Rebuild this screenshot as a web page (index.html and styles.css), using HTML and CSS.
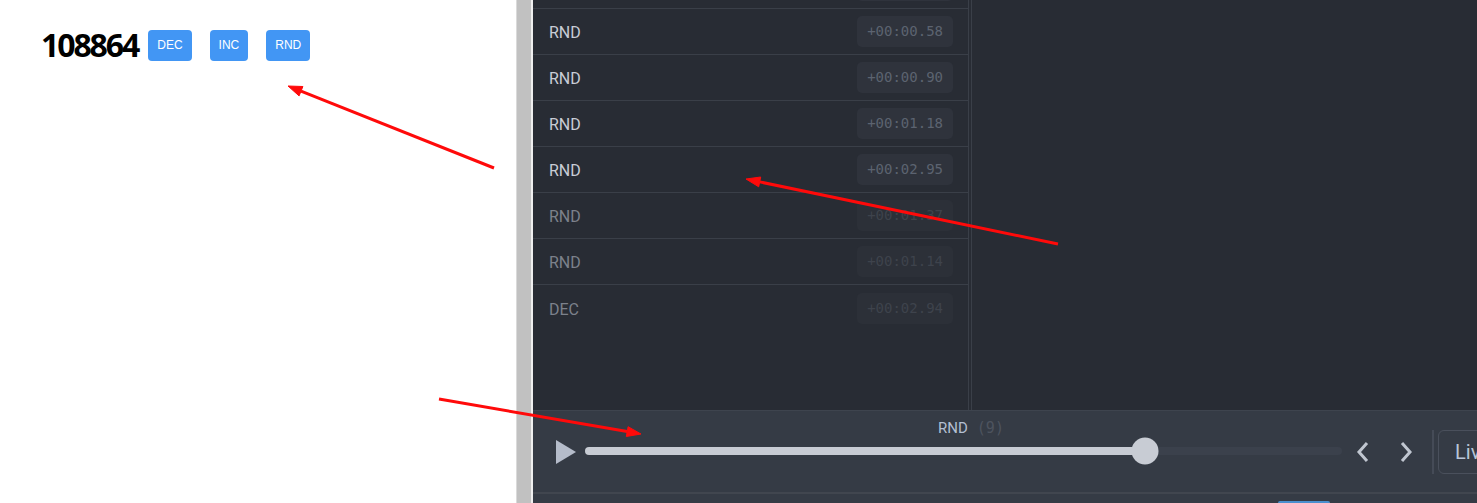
FILE: index.html
```html
<!DOCTYPE html>
<html lang="en">
<head>
<meta charset="utf-8">
<title>Counter with time travel</title>
<link rel="stylesheet" href="styles.css">
</head>
<body>
<div class="page">
  <section class="demo">
    <div class="counter">
      <span class="count">108864</span>
      <button class="btn">DEC</button>
      <button class="btn">INC</button>
      <button class="btn">RND</button>
    </div>
  </section>
  <div class="splitter"></div>
  <section class="devtools">
    <div class="panes">
      <div class="actions">
        <ul class="action-list">
          <li class="action"><span class="name">RND</span><span class="time">+00:01.02</span></li>
          <li class="action"><span class="name">RND</span><span class="time">+00:00.58</span></li>
          <li class="action"><span class="name">RND</span><span class="time">+00:00.90</span></li>
          <li class="action"><span class="name">RND</span><span class="time">+00:01.18</span></li>
          <li class="action"><span class="name">RND</span><span class="time">+00:02.95</span></li>
          <li class="action future"><span class="name">RND</span><span class="time">+00:01.37</span></li>
          <li class="action future"><span class="name">RND</span><span class="time">+00:01.14</span></li>
          <li class="action future"><span class="name">DEC</span><span class="time">+00:02.94</span></li>
        </ul>
      </div>
      <div class="inspector"></div>
    </div>
    <div class="player">
      <button class="play" aria-label="Play">
        <svg width="20" height="24" viewBox="0 0 20 24"><polygon points="0,0 20,12 0,24" fill="#b5bcca"/></svg>
      </button>
      <div class="slider">
        <div class="slider-label">RND<span class="slider-count">(9)</span></div>
        <div class="track">
          <div class="fill" style="width:74%"></div>
          <div class="thumb" style="left:74%"></div>
        </div>
      </div>
      <button class="step step-prev" aria-label="Previous">
        <svg width="13" height="22" viewBox="0 0 13 22"><polyline points="11,2 3,11 11,20" fill="none" stroke="#c0c6d0" stroke-width="3"/></svg>
      </button>
      <button class="step step-next" aria-label="Next">
        <svg width="13" height="22" viewBox="0 0 13 22"><polyline points="2,2 10,11 2,20" fill="none" stroke="#c0c6d0" stroke-width="3"/></svg>
      </button>
      <div class="sep"></div>
      <button class="live">Live</button>
    </div>
    <div class="tabs"><span class="tab-active"></span></div>
  </section>
  <svg class="annotations" width="1477" height="503" viewBox="0 0 1477 503">
    <g stroke="#ff0a0a" stroke-width="3" fill="#ff0a0a">
      <line x1="494" y1="168" x2="301" y2="91.2"/>
      <polygon points="288,86 302.9,86.5 299.1,95.9" stroke-width="1"/>
      <line x1="1058" y1="244" x2="759.7" y2="181.9"/>
      <polygon points="746,179 760.7,177 758.7,186.8" stroke-width="1"/>
      <line x1="439" y1="399" x2="627.2" y2="431.6"/>
      <polygon points="641,434 626.3,436.5 628.1,426.7" stroke-width="1"/>
    </g>
  </svg>
</div>
</body>
</html>
```
FILE: styles.css
```css
* { box-sizing: border-box; }
html, body { margin: 0; padding: 0; }
body { width: 1477px; height: 503px; overflow: hidden; background: #fff; }

.page {
  position: relative;
  display: flex;
  width: 1477px;
  height: 503px;
  overflow: hidden;
}

/* left demo app */
.demo {
  width: 516px;
  flex: none;
  background: #fff;
  padding: 26px 0 0 41px;
}
.counter {
  display: flex;
  align-items: center;
  gap: 18px;
}
.count {
  font-family: "Noto Sans", "Open Sans", sans-serif;
  font-weight: 700;
  font-size: 32px;
  line-height: 38px;
  letter-spacing: -2.1px;
  color: #000;
  margin-right: -8px;
}
.btn {
  height: 31px;
  padding: 0 9px;
  border: none;
  border-radius: 4px;
  background: #4296f4;
  color: #fff;
  font-family: "Liberation Sans", Arial, sans-serif;
  font-size: 12px;
  line-height: 31px;
}

.splitter {
  flex: none;
  width: 17px;
  background: #c1c1c1;
  border-left: 1px solid #dadada;
  border-right: 2px solid #efefef;
}

/* devtools */
.devtools {
  flex: 1;
  display: flex;
  flex-direction: column;
  background: #282c34;
  min-width: 0;
}
.panes {
  flex: 1;
  display: flex;
  min-height: 0;
  overflow: hidden;
}
.actions {
  width: 436px;
  flex: none;
  border-right: 1px solid #3a3f48;
  overflow: hidden;
}
.action-list {
  list-style: none;
  margin: -37px 0 0;
  padding: 0;
}
.action {
  height: 46px;
  display: flex;
  align-items: center;
  justify-content: space-between;
  padding: 0 15px 0 16px;
  border-bottom: 1px solid #3a3f48;
}
.action:last-child { border-bottom: none; }
.name {
  font-family: Roboto, "Noto Sans", sans-serif;
  font-size: 16px;
  padding-top: 2px;
  color: #c8cdd6;
}
.time {
  height: 31px;
  line-height: 31px;
  padding: 0 10px;
  border-radius: 5px;
  background: #2f333c;
  font-family: "DejaVu Sans Mono", monospace;
  font-size: 14px;
  color: #5c6370;
}
.future .name { color: #7c818b; }
.future .time { color: #3e434c; background: #2c3038; }

.inspector {
  flex: 1;
  margin-left: 2px;
  border-left: 1px solid #3a3f48;
}

/* player */
.player {
  height: 82px;
  flex: none;
  display: flex;
  align-items: center;
  padding-left: 23px;
  background: #353b45;
  border-top: 1px solid #3e444e;
  overflow: hidden;
}
.play, .step, .live {
  background: none;
  border: none;
  padding: 0;
  margin: 0;
  display: flex;
  align-items: center;
  justify-content: center;
}
.play { width: 20px; height: 24px; }
.slider {
  flex: 0 0 757px;
  margin-left: 9px;
  align-self: flex-start;
  padding-top: 8px;
}
.slider-label {
  height: 18px;
  line-height: 18px;
  text-align: center;
  padding-left: 15px;
  font-family: Roboto, sans-serif;
  font-size: 15px;
  color: #b3bfd2;
  white-space: pre;
}
.slider-count {
  margin-left: 9px;
  font-family: "DejaVu Sans Mono", monospace;
  font-size: 15px;
  color: #4d535e;
}
.track {
  position: relative;
  height: 8px;
  margin-top: 10px;
  border-radius: 4px;
  background: #3b414c;
}
.fill {
  height: 8px;
  border-radius: 4px;
  background: #c8ccd4;
}
.thumb {
  position: absolute;
  top: 50%;
  width: 27px;
  height: 27px;
  border-radius: 50%;
  background: #c8ccd4;
  transform: translate(-50%, -50%);
}
.step { width: 41px; height: 44px; flex: none; }
.step-next { margin-left: 3px; }
.sep {
  flex: none;
  width: 2px;
  height: 44px;
  margin-left: 5px;
  background: #454b57;
}
.live {
  flex: none;
  margin-left: 4px;
  height: 44px;
  padding: 0 16px;
  border: 1px solid #4a505c;
  border-radius: 6px;
  font-family: Roboto, sans-serif;
  font-size: 20px;
  color: #b9c5d8;
}

.tabs {
  height: 11px;
  flex: none;
  display: flex;
  align-items: flex-end;
  padding-left: 745px;
  background: #353b45;
  border-top: 2px solid #41464f;
}
.tab-active {
  width: 52px;
  height: 2px;
  border-radius: 2px 2px 0 0;
  background: #4a8fce;
}

.annotations {
  position: absolute;
  top: 0;
  left: 0;
  pointer-events: none;
}
```
